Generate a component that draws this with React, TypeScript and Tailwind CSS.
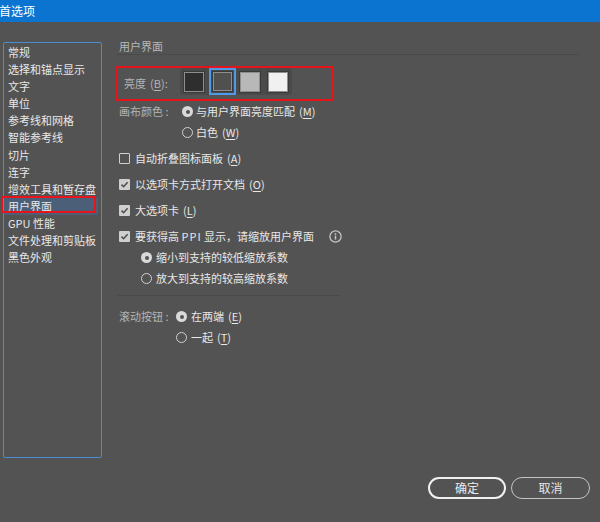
import React from "react";

const navItems = [
  "常规",
  "选择和锚点显示",
  "文字",
  "单位",
  "参考线和网格",
  "智能参考线",
  "切片",
  "连字",
  "增效工具和暂存盘",
  "用户界面",
  "GPU 性能",
  "文件处理和剪贴板",
  "黑色外观",
];

function Key({ k }: { k: string }) {
  return (
    <span className="ml-[4px]">
      (<span className="underline underline-offset-2">{k}</span>)
    </span>
  );
}

function Radio({ checked }: { checked?: boolean }) {
  return checked ? (
    <span className="flex h-[11px] w-[11px] shrink-0 items-center justify-center rounded-full bg-[#d9d9d9]">
      <span className="h-[4px] w-[4px] rounded-full bg-[#535353]" />
    </span>
  ) : (
    <span className="h-[11px] w-[11px] shrink-0 rounded-full border-[1.5px] border-[#d0d0d0]" />
  );
}

function Check({ checked }: { checked?: boolean }) {
  return checked ? (
    <span className="flex h-[11px] w-[11px] shrink-0 items-center justify-center rounded-[1px] bg-[#cfcfcf]">
      <svg width="9" height="9" viewBox="0 0 9 9">
        <path d="M1.5 4.6 L3.6 6.7 L7.6 2.2" fill="none" stroke="#4f4f4f" strokeWidth="1.6" />
      </svg>
    </span>
  ) : (
    <span className="h-[11px] w-[11px] shrink-0 rounded-[1px] border border-[#d0d0d0]" />
  );
}

const swatches = ["#2e2e2e", "#505050", "#b8b8b8", "#f0f0f0"];

export default function App() {
  return (
    <div className="relative flex h-[522px] w-[600px] flex-col overflow-hidden bg-[#535353] font-['Noto_Sans_CJK_SC',sans-serif] text-[11px] text-[#e8e8e8]">
      {/* title bar */}
      <div className="h-[22px] shrink-0 bg-[#0a74d0] text-[12px] leading-[21px] text-white">
        <span className="-ml-[1px]">首选项</span>
      </div>

      <div className="flex h-[436px] items-start">
        {/* left nav */}
        <div className="relative ml-[3px] mt-[20px] h-[416px] w-[99px] rounded-[2px] border border-[#4a8cd0]">
          <ul className="pt-[1px] leading-[17.1px]">
            {navItems.map((item) =>
              item === "用户界面" ? (
                <li key={item} className="relative mr-[3px] bg-[#4b6078] pl-[4px]">
                  {item}
                  <span className="absolute -left-[3px] -top-[2px] h-[17px] w-[95px] border-2 border-[#e8141c]" />
                </li>
              ) : (
                <li key={item} className="pl-[4px]">
                  {item}
                </li>
              )
            )}
          </ul>
        </div>

        {/* right content */}
        <div className="ml-[14px] mt-[16px] w-[463px]">
          <div className="h-[17px] border-b border-[#4a4a4a] pl-[3px] leading-[17px] text-[#b8b8b8]">
            用户界面
          </div>

          {/* brightness */}
          <div className="mt-[11px] flex h-[35px] w-[217px] items-start border-2 border-[#e8141c] pl-[6px]">
            <span className="mt-[7px] w-[56px] leading-[17px] text-[#b4b4b4]">
              亮度<Key k="B" />:
            </span>
            <div className="flex h-[27px] w-[112px] bg-[#4a4a4a]">
              {swatches.map((c, i) => (
                <div key={c} className="flex h-[27px] w-[28px] items-center justify-center">
                  {i === 1 ? (
                    <div className="flex h-[27px] w-[27px] items-center justify-center border-2 border-[#4d9be6]">
                      <div
                        className="h-[21px] w-[21px] border border-[#3a3a3a] shadow-[inset_0_0_0_1px_#8e8e8e]"
                        style={{ backgroundColor: c }}
                      />
                    </div>
                  ) : (
                    <div
                      className="h-[22px] w-[22px] border border-[#3a3a3a] shadow-[inset_0_0_0_1px_#8e8e8e]"
                      style={{ backgroundColor: c }}
                    />
                  )}
                </div>
              ))}
            </div>
          </div>

          {/* canvas colour */}
          <div className="mt-[2px] flex h-[17px] items-center pl-[3px] leading-[17px]">
            <span className="w-[63px] text-[#b4b4b4]">画布颜色 :</span>
            <Radio checked />
            <span className="ml-[3px]">
              与用户界面亮度匹配<Key k="M" />
            </span>
          </div>
          <div className="mt-[4px] flex h-[17px] items-center pl-[66px] leading-[17px]">
            <Radio />
            <span className="ml-[3px]">
              白色<Key k="W" />
            </span>
          </div>

          <div className="mt-[9px] flex h-[17px] items-center gap-[5px] pl-[3px] leading-[17px]">
            <Check />
            <span>
              自动折叠图标面板<Key k="A" />
            </span>
          </div>
          <div className="mt-[9px] flex h-[17px] items-center gap-[5px] pl-[3px] leading-[17px]">
            <Check checked />
            <span>
              以选项卡方式打开文档<Key k="O" />
            </span>
          </div>
          <div className="mt-[9px] flex h-[17px] items-center gap-[5px] pl-[3px] leading-[17px]">
            <Check checked />
            <span>
              大选项卡<Key k="L" />
            </span>
          </div>
          <div className="mt-[9px] flex h-[17px] items-center gap-[5px] pl-[3px] leading-[17px]">
            <Check checked />
            <span>
              要获得高 <span className="tracking-[1px]">PPI</span> 显示，请缩放用户界面
            </span>
            <svg className="ml-[10px]" width="13" height="13" viewBox="0 0 13 13">
              <circle cx="6.5" cy="6.5" r="5.6" fill="none" stroke="#c4c4c4" strokeWidth="1.3" />
              <circle cx="6.5" cy="3.9" r="0.9" fill="#c4c4c4" />
              <path d="M6.5 5.6 V9.6" stroke="#c4c4c4" strokeWidth="1.5" />
            </svg>
          </div>
          <div className="mt-[4px] flex h-[17px] items-center gap-[4px] pl-[25px] leading-[17px]">
            <Radio checked />
            <span>缩小到支持的较低缩放系数</span>
          </div>
          <div className="mt-[4px] flex h-[17px] items-center gap-[4px] pl-[25px] leading-[17px]">
            <Radio />
            <span>放大到支持的较高缩放系数</span>
          </div>

          <div className="ml-[2px] mt-[8px] h-px w-[222px] bg-[#494949]" />

          <div className="mt-[12px] flex h-[17px] items-center pl-[3px] leading-[17px]">
            <span className="w-[57px] text-[#b4b4b4]">滚动按钮 :</span>
            <Radio checked />
            <span className="ml-[4px]">
              在两端<Key k="E" />
            </span>
          </div>
          <div className="mt-[4px] flex h-[17px] items-center pl-[60px] leading-[17px]">
            <Radio />
            <span className="ml-[4px]">
              一起<Key k="T" />
            </span>
          </div>
        </div>
      </div>

      {/* buttons */}
      <div className="mt-[19px] flex justify-end gap-[5px] pr-[10px]">
        <button className="h-[22px] w-[78px] rounded-full border-2 border-[#f0f0f0] text-[12px] text-[#ececec]">
          确定
        </button>
        <button className="h-[22px] w-[79px] rounded-full border-[1.5px] border-[#c4c4c4] text-[12px] text-[#e6e6e6]">
          取消
        </button>
      </div>
    </div>
  );
}
